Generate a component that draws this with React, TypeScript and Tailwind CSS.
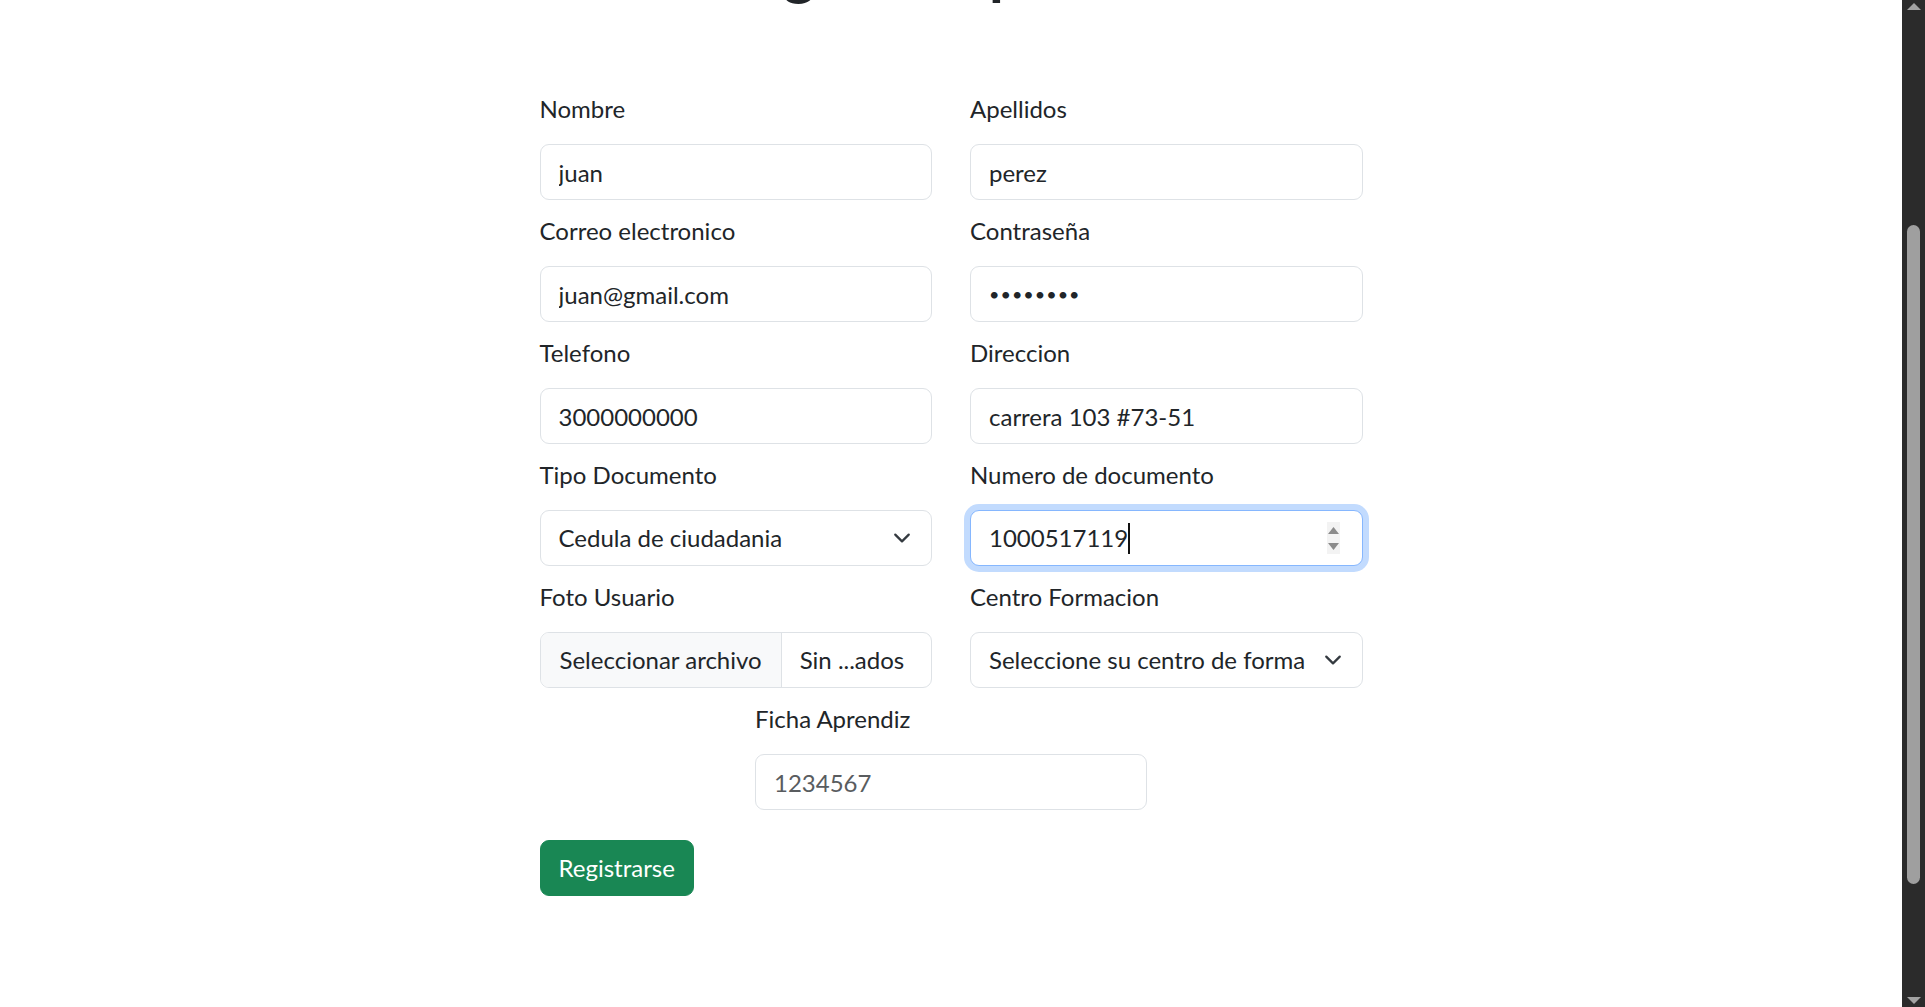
import { ReactNode } from 'react';

const inputBase =
    'h-[56px] w-full rounded-[9px] border border-[#dee2e6] bg-white px-[18px] text-[24px] text-[#212529] outline-none';

function Field({ label, children }: { label: string; children: ReactNode }) {
    return (
        <div className="flex flex-col">
            <label className="mb-[17px] text-[24px] leading-[36px] text-[#212529]">{label}</label>
            {children}
        </div>
    );
}

function TextInput({ value, type = 'text' }: { value: string; type?: string }) {
    return <input className={inputBase} type={type} defaultValue={value} readOnly />;
}

function Chevron() {
    return (
        <svg width="18" height="18" viewBox="0 0 16 16" fill="none" className="shrink-0">
            <path d="m2 5 6 6 6-6" stroke="#343a40" strokeWidth="2" strokeLinecap="round" strokeLinejoin="round" />
        </svg>
    );
}

function SelectBox({ value }: { value: string }) {
    return (
        <div className="flex h-[56px] w-full items-center rounded-[9px] border border-[#dee2e6] bg-white pl-[18px] pr-[20px] text-[24px] text-[#212529]">
            <span className="mr-[16px] flex-1 overflow-hidden whitespace-nowrap">{value}</span>
            <Chevron />
        </div>
    );
}

export default function App() {
    return (
        <div
            className="flex h-[1007px] w-full overflow-hidden bg-white"
            style={{ fontFamily: '"Segoe UI", Lato, "Noto Sans", sans-serif' }}
        >
            <main className="flex flex-1 flex-col items-center overflow-hidden">
                {/* page is scrolled, only the descenders of the title show */}
                <h1 className="mt-[-66px] h-[72px] text-center text-[60px] font-bold leading-[72px] text-[#212529]">
                    Registro Aprendiz
                </h1>

                <form className="mt-[85px] flex w-[823px] flex-col">
                    <div className="grid grid-cols-2 gap-x-[38px] gap-y-[13px]">
                        <Field label="Nombre">
                            <TextInput value="juan" />
                        </Field>
                        <Field label="Apellidos">
                            <TextInput value="perez" />
                        </Field>
                        <Field label="Correo electronico">
                            <TextInput value="juan@gmail.com" />
                        </Field>
                        <Field label="Contraseña">
                            <div className="flex h-[56px] w-full items-center rounded-[9px] border border-[#dee2e6] bg-white px-[18px] text-[18px] tracking-[1px] text-[#212529]">
                                ••••••••
                            </div>
                        </Field>
                        <Field label="Telefono">
                            <TextInput value="3000000000" />
                        </Field>
                        <Field label="Direccion">
                            <TextInput value="carrera 103 #73-51" />
                        </Field>
                        <Field label="Tipo Documento">
                            <SelectBox value="Cedula de ciudadania" />
                        </Field>
                        <Field label="Numero de documento">
                            <div className="flex h-[56px] w-full items-center rounded-[9px] border border-[#86b7fe] bg-white pl-[18px] pr-[22px] text-[24px] text-[#212529] shadow-[0_0_0_6px_rgba(13,110,253,0.25)]">
                                <span>1000517119</span>
                                <span className="h-[31px] w-[2px] bg-[#111]" />
                                <span className="flex-1" />
                                <div className="flex h-[32px] w-[13px] flex-col items-center justify-center gap-[9px] bg-[#f3f3f3]">
                                    <svg width="11" height="7" viewBox="0 0 11 7">
                                        <path d="M5.5 0 11 7H0z" fill="#8b8b8b" />
                                    </svg>
                                    <svg width="11" height="7" viewBox="0 0 11 7">
                                        <path d="M0 0h11L5.5 7z" fill="#8b8b8b" />
                                    </svg>
                                </div>
                            </div>
                        </Field>
                        <Field label="Foto Usuario">
                            <div className="flex h-[56px] w-full items-center overflow-hidden rounded-[9px] border border-[#dee2e6] bg-white text-[24px] text-[#212529]">
                                <span className="flex h-full items-center border-r border-[#dee2e6] bg-[#f8f9fa] px-[19px] whitespace-nowrap">
                                    Seleccionar archivo
                                </span>
                                <span className="px-[18px] whitespace-nowrap">Sin ...ados</span>
                            </div>
                        </Field>
                        <Field label="Centro Formacion">
                            <SelectBox value="Seleccione su centro de forma" />
                        </Field>
                    </div>

                    <div className="mt-[13px] flex justify-center">
                        <div className="w-[392px]">
                            <Field label="Ficha Aprendiz">
                                <input className={inputBase + ' placeholder:text-[#595c5f]'} placeholder="1234567" readOnly />
                            </Field>
                        </div>
                    </div>

                    <div className="mt-[30px]">
                        <button
                            type="button"
                            className="h-[56px] rounded-[9px] border border-[#198754] bg-[#198754] px-[18px] text-[24px] text-white"
                        >
                            Registrarse
                        </button>
                    </div>
                </form>
            </main>

            {/* dark window scrollbar */}
            <aside className="flex w-[23px] flex-col items-center bg-[#2b2b2b] py-[3px]">
                <svg width="14" height="7" viewBox="0 0 14 7">
                    <path d="M7 0 14 7H0z" fill="#a3a3a3" />
                </svg>
                <div className="mt-[215px] h-[659px] w-[13px] rounded-full bg-[#9f9f9f]" />
                <div className="flex-1" />
                <svg width="14" height="7" viewBox="0 0 14 7">
                    <path d="M0 0h14L7 7z" fill="#a3a3a3" />
                </svg>
            </aside>
        </div>
    );
}
